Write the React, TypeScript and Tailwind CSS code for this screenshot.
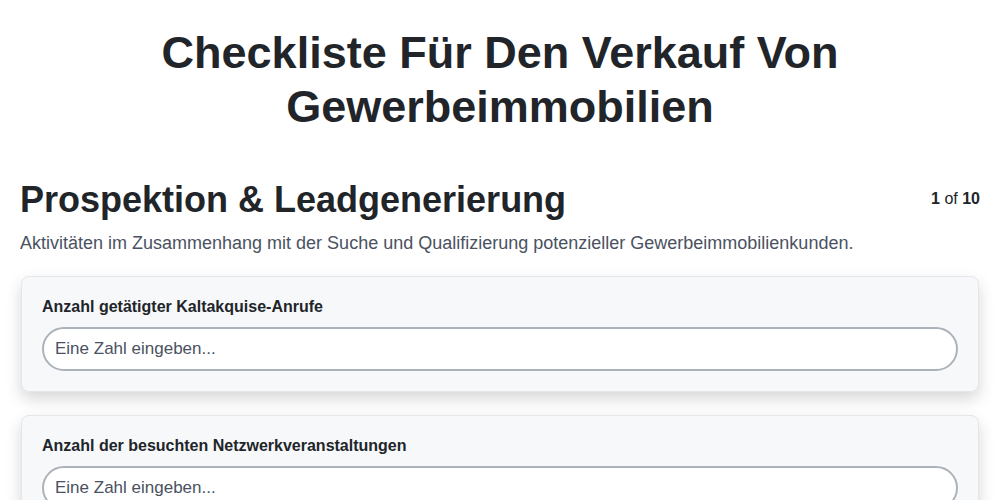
const fields = [
  'Anzahl getätigter Kaltakquise-Anrufe',
  'Anzahl der besuchten Netzwerkveranstaltungen',
  'Anzahl qualifizierter Leads',
];

export default function App() {
  return (
    <div className="min-h-screen bg-white text-[#212529]" style={{ fontFamily: '"Liberation Sans", Arial, sans-serif' }}>
      <div className="px-5 pt-[26px]">
        <h1 className="mx-auto max-w-[760px] text-center text-[45px] font-bold leading-[54px]">
          Checkliste Für Den Verkauf Von Gewerbeimmobilien
        </h1>

        <div className="mt-[44px] flex items-start justify-between">
          <h2 className="text-[36px] font-bold leading-[44px]">Prospektion &amp; Leadgenerierung</h2>
          <div className="pt-[9px] text-[16px]">
            <span className="font-bold">1</span> of <span className="font-bold">10</span>
          </div>
        </div>
        <p className="mt-[8px] text-[18px] leading-[26px] text-[#4a5261]">
          Aktivitäten im Zusammenhang mit der Suche und Qualifizierung potenzieller Gewerbeimmobilienkunden.
        </p>

        <div className="mt-[20px] flex flex-col gap-[23px]">
          {fields.map((f) => (
            <div
              key={f}
              className="mx-px rounded-lg border border-[#e4e6ea] bg-[#f7f8fa] px-5 pt-[20px] pb-[20px] shadow-[0_7px_16px_rgba(0,0,0,0.16)]"
            >
              <label className="block text-[16px] font-bold leading-5">{f}</label>
              <input
                type="text"
                placeholder="Eine Zahl eingeben..."
                className="mt-[10px] block h-[44px] w-full rounded-full border-2 border-[#abb2ba] bg-white px-[11px] text-[17px] placeholder:text-[#4a5261] outline-none"
              />
            </div>
          ))}
        </div>
      </div>
    </div>
  );
}
